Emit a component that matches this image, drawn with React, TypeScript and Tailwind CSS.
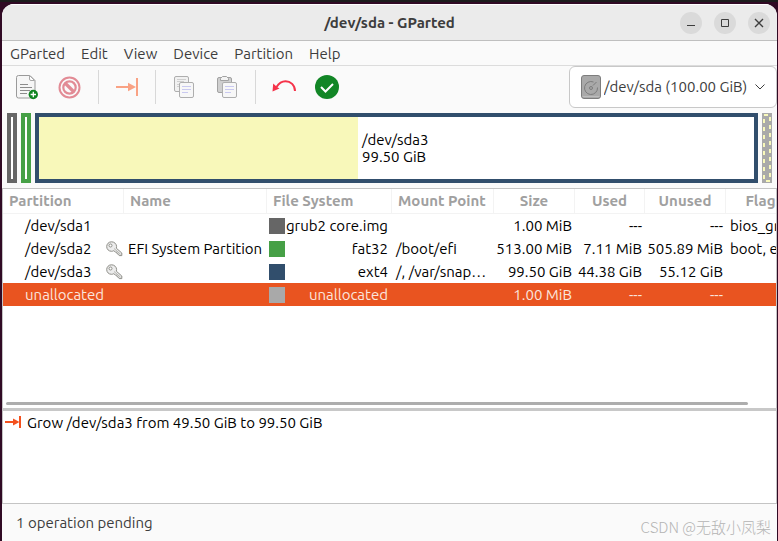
import React from "react";

type Row = {
  name: string;
  locked: boolean;
  label: string;
  fs: string;
  color: string;
  mount: string;
  size: string;
  used: string;
  unused: string;
  flags: string;
  selected?: boolean;
};

const rows: Row[] = [
  { name: "/dev/sda1", locked: false, label: "", fs: "grub2 core.img", color: "bg-[#666666]", mount: "", size: "1.00 MiB", used: "---", unused: "---", flags: "bios_grub" },
  { name: "/dev/sda2", locked: true, label: "EFI System Partition", fs: "fat32", color: "bg-[#46a046]", mount: "/boot/efi", size: "513.00 MiB", used: "7.11 MiB", unused: "505.89 MiB", flags: "boot, esp" },
  { name: "/dev/sda3", locked: true, label: "", fs: "ext4", color: "bg-[#314e6c]", mount: "/, /var/snap…", size: "99.50 GiB", used: "44.38 GiB", unused: "55.12 GiB", flags: "" },
  { name: "unallocated", locked: false, label: "", fs: "unallocated", color: "bg-[#a9a9a9]", mount: "", size: "1.00 MiB", used: "---", unused: "---", flags: "", selected: true },
];

const menus = ["GParted", "Edit", "View", "Device", "Partition", "Help"];

function NewIcon() {
  return (
    <svg width="22" height="26" viewBox="0 0 22 26" fill="none">
      <path d="M2 1.5h11.500l5 5V22a2 2 0 0 1-2 2H2a2 2 0 0 1-2-2V3.500a2 2 0 0 1 2-2z" transform="translate(0.5 0)" fill="#f6f6f6" stroke="#9a9a9a" />
      <path d="M13.500 1.500V5a1.500 1.500 0 0 0 1.500 1.500h3.500z" fill="#fff" stroke="#a8a8a8" />
      <path d="M4 10.500h8M4 13.500h12M4 16.500h10M4 19.500h7" stroke="#8c8c8c" />
      <circle cx="17.300" cy="20.500" r="4.700" fill="#0f8420" />
      <path d="M17.300 17.800v5.400M14.600 20.500h5.400" stroke="#fff" strokeWidth="1.300" />
    </svg>
  );
}

function DeleteIcon() {
  return (
    <svg width="24" height="24" viewBox="0 0 24 24" fill="none" stroke="#e28b95">
      <circle cx="11.500" cy="12.500" r="10" strokeWidth="2" />
      <circle cx="11.500" cy="12.500" r="6.200" strokeWidth="2.200" />
      <path d="M7 8l9 9" strokeWidth="3.200" />
    </svg>
  );
}

function ResizeIcon() {
  return (
    <svg width="24" height="24" viewBox="0 0 24 24" fill="none">
      <path d="M1 12h14" stroke="#f9a284" strokeWidth="2" />
      <path d="M13 7.800L21 12l-8 4.200z" fill="#f9a284" />
      <path d="M22 3v18" stroke="#f9a284" strokeWidth="2" />
    </svg>
  );
}

function CopyIcon() {
  return (
    <svg width="24" height="24" viewBox="0 0 24 24" fill="none">
      <rect x="2.500" y="1.500" width="14" height="15" rx="1.500" fill="#f1f1f1" stroke="#aeaeae" />
      <path d="M5 4.500h9M5 6.500h7M5 9.500h3M5 11.500h3" stroke="#cfcfcf" />
      <rect x="7.500" y="7.500" width="14" height="15" rx="1.500" fill="#f7f7f7" stroke="#aeaeae" />
      <path d="M10 11.500h9M10 14.500h9M10 17.500h6" stroke="#c9c9f0" />
    </svg>
  );
}

function PasteIcon() {
  return (
    <svg width="24" height="24" viewBox="0 0 24 24" fill="none">
      <rect x="2.500" y="2.500" width="14" height="15" rx="1.500" fill="#cfcfcf" stroke="#a2a2a2" />
      <path d="M5.500 5.500v-2l2-2h4l2 2v2z" fill="#f3f3f3" stroke="#a2a2a2" />
      <rect x="7.500" y="7.500" width="14" height="15" rx="1.500" fill="#f7f7f7" stroke="#aeaeae" />
      <path d="M10 11.500h9M10 14.500h9M10 17.500h6" stroke="#c9c9f0" />
    </svg>
  );
}

function UndoIcon() {
  return (
    <svg width="24" height="24" viewBox="0 0 24 24" fill="none">
      <path d="M23 16C23 10 18.500 6.200 13.500 6.200C9.500 6.200 7 8 4.500 12" stroke="#f5334a" strokeWidth="2" />
      <path d="M1.200 8.500L0.500 16.500L7.500 13.500L5 12z" fill="#f5334a" />
    </svg>
  );
}

function ApplyIcon() {
  return (
    <svg width="24" height="24" viewBox="0 0 24 24" fill="none">
      <circle cx="12" cy="12" r="12" fill="#128626" />
      <path d="M6 12l4.500 4.500L18 9" stroke="#fff" strokeWidth="2" />
    </svg>
  );
}

function DiskIcon() {
  return (
    <svg width="20" height="24" viewBox="0 0 20 24" fill="none">
      <rect x="0.500" y="0.500" width="19" height="23" rx="2.500" fill="#a9a9a9" stroke="#7d7d7d" />
      <path d="M1.500 21.500h17" stroke="#bdbdbd" />
      <path d="M12.500 7A6.500 6.500 0 1 0 16.500 12.500" stroke="#7c7c7c" />
      <path d="M12 10.500l3.500-3.500" stroke="#7c7c7c" />
      <circle cx="10" cy="13" r="1.500" stroke="#7c7c7c" />
    </svg>
  );
}

function KeyIcon() {
  return (
    <svg width="17" height="16" viewBox="0 0 17 16" fill="none" role="img" aria-label="Locked">
      <path
        d="M5.500 0.800C8.400 0.800 10.600 3 10.600 5.600C10.600 6.200 10.500 6.700 10.300 7.200L15.800 12V14.600H13.200L12.600 13.200L11 12.700L10.700 11.200L9.300 11L7.800 9.700C7.100 10.100 6.300 10.300 5.500 10.300C2.700 10.300 0.700 8.200 0.700 5.600C0.700 3 2.700 0.800 5.500 0.800z"
        fill="#ececec"
        stroke="#8e8e88"
      />
      <circle cx="4.500" cy="4.500" r="1.500" fill="#fff" stroke="#8e8e88" />
      <path d="M8 7.500l6.500 5.700" stroke="#b5b5b0" />
    </svg>
  );
}

function ToolButton({ label, children }: { label: string; children: React.ReactNode }) {
  return (
    <button type="button" aria-label={label} className="flex h-10 w-[43px] shrink-0 items-center justify-center">
      {children}
    </button>
  );
}

function Separator() {
  return (
    <div className="flex w-[14px] shrink-0 justify-center">
      <div className="h-[34px] w-px bg-[#d8d8d8]" />
    </div>
  );
}

function WindowButton({ label, children }: { label: string; children: React.ReactNode }) {
  return (
    <button type="button" aria-label={label} className="flex size-[22px] items-center justify-center rounded-full bg-[#dadada]">
      <svg width="12" height="12" viewBox="0 0 12 12" fill="none" stroke="#3d3d3d">
        {children}
      </svg>
    </button>
  );
}

const th = "h-[25px] overflow-hidden border-r border-b border-[#f3f3f3] p-0 font-bold whitespace-nowrap";
const td = "h-[23px] overflow-hidden p-0 whitespace-nowrap";

export default function App() {
  return (
    <div className="flex min-h-screen flex-col border-t-2 border-[#1c1c1c] bg-[#300a24] pt-[2px] pr-px pl-[2px] font-['Ubuntu','Noto_Sans',sans-serif] text-[15px] leading-[18px] text-[#3d3d3d]">
      <div className="flex flex-1 flex-col overflow-hidden rounded-t-xl bg-[#fafafa]">
        <header className="grid h-[37px] grid-cols-[1fr_auto_1fr] items-center border-t border-b border-t-white border-b-[#bfbfbf] bg-[#ebebeb]">
          <div />
          <h1 className="font-bold">/dev/sda - GParted</h1>
          <div className="flex justify-end gap-3 pr-[7px]">
            <WindowButton label="Minimize"><path d="M2 8.500h8" /></WindowButton>
            <WindowButton label="Maximize"><path d="M2.500 2.500h7v7h-7z" /></WindowButton>
            <WindowButton label="Close"><path d="M2 2l8 8M10 2l-8 8" strokeWidth="1.400" /></WindowButton>
          </div>
        </header>

        <nav className="flex h-[25px] items-center gap-4 border-b border-[#dcdcdc] px-2 pt-px">
          {menus.map((m) => (
            <button type="button" key={m}>{m}</button>
          ))}
        </nav>

        <div className="flex h-[42px] items-center pl-[3px]">
          <ToolButton label="New"><NewIcon /></ToolButton>
          <ToolButton label="Delete"><DeleteIcon /></ToolButton>
          <Separator />
          <ToolButton label="Resize/Move"><ResizeIcon /></ToolButton>
          <Separator />
          <ToolButton label="Copy"><CopyIcon /></ToolButton>
          <ToolButton label="Paste"><PasteIcon /></ToolButton>
          <Separator />
          <ToolButton label="Undo"><UndoIcon /></ToolButton>
          <ToolButton label="Apply"><ApplyIcon /></ToolButton>
          <div className="relative ml-auto h-[42px] w-[208px]">
            <select
              aria-label="Device"
              className="h-full w-full appearance-none rounded-md border border-[#c8c8c8] bg-white pr-6 pl-[34px]"
            >
              <option>/dev/sda (100.00 GiB)</option>
            </select>
            <div className="pointer-events-none absolute inset-0 flex items-center justify-between pr-3 pl-3">
              <DiskIcon />
              <svg width="10" height="6" viewBox="0 0 10 6" fill="none" stroke="#3d3d3d">
                <path d="M0.500 0.500L5 5L9.500 0.500" />
              </svg>
            </div>
          </div>
        </div>

        <div className="flex h-20 gap-1 px-[5px] py-[5px]">
          <div className="w-[10px] shrink-0 border-4 border-[#666666] bg-white" />
          <div className="w-[10px] shrink-0 border-4 border-[#46a046] bg-white" />
          <div className="flex flex-1 items-center border-4 border-[#314e6c] bg-white text-black">
            <div className="h-full w-[319px] shrink-0 bg-[#f8f8ba]" />
            <p className="pl-1 leading-[17px]">
              /dev/sda3<br />99.50 GiB
            </p>
          </div>
          <svg className="h-full w-[10px] shrink-0" viewBox="0 0 10 70">
            <rect width="10" height="70" fill="#a9a9a9" />
            <path d="M2 6V70M8 4V66" stroke="#f8f8ba" strokeWidth="2" strokeDasharray="4 4" />
            <path d="M2 2h4M4 68h4" stroke="#f8f8ba" strokeWidth="2" />
          </svg>
        </div>

        <section className="flex h-[220px] flex-col overflow-hidden border-t border-r border-l border-[#c4c4c4] bg-white text-black">
          <table className="w-[800px] table-fixed border-separate border-spacing-0">
            <colgroup>
              <col className="w-[121px]" />
              <col className="w-[143px]" />
              <col className="w-[125px]" />
              <col className="w-[102px]" />
              <col className="w-[81px]" />
              <col className="w-[70px]" />
              <col className="w-[81px]" />
              <col className="w-[77px]" />
            </colgroup>
            <thead className="text-[#a0a0a0]">
              <tr>
                <th className={`${th} pl-[6px] text-left`}>Partition</th>
                <th className={`${th} pl-[6px] text-left`}>Name</th>
                <th className={`${th} pl-[6px] text-left`}>File System</th>
                <th className={`${th} pl-[6px] text-left`}>Mount Point</th>
                <th className={th}>Size</th>
                <th className={th}>Used</th>
                <th className={th}>Unused</th>
                <th className={th}>Flags</th>
              </tr>
            </thead>
            <tbody>
              {rows.map((r) => (
                <tr key={r.name} className={r.selected ? "bg-[#e95420] text-[#fbe5dd]" : ""}>
                  <td className={td}>
                    <div className="flex items-center justify-between pr-px pl-[22px]">
                      {r.name}
                      {r.locked && <KeyIcon />}
                    </div>
                  </td>
                  <td className={`${td} pl-1`}>{r.label}</td>
                  <td className={td}>
                    <div className="flex items-center justify-between pr-1 pl-[2px]">
                      <span className={`size-4 shrink-0 ${r.color}`} />
                      {r.fs}
                    </div>
                  </td>
                  <td className={`${td} pl-1`}>{r.mount}</td>
                  <td className={`${td} pr-[3px] text-right`}>{r.size}</td>
                  <td className={`${td} pr-[3px] text-right`}>{r.used}</td>
                  <td className={`${td} pr-[3px] text-right`}>{r.unused}</td>
                  <td className={`${td} pl-1`}>{r.flags}</td>
                </tr>
              ))}
            </tbody>
          </table>
          <div className="mt-auto mr-7 mb-[3px] ml-[3px] h-[3px] shrink-0 rounded-full bg-[#adadad]" />
        </section>

        <div className="h-[3px] shrink-0 bg-[#c8c8c8]" />

        <section className="flex-1 border-r border-b border-l border-[#c4c4c4] bg-white text-black">
          <div className="flex h-[23px] items-center gap-1 pl-[2px]">
            <svg width="18" height="16" viewBox="0 0 18 16" fill="none" className="shrink-0">
              <path d="M0 7h10" stroke="#f4511e" strokeWidth="2" />
              <path d="M8 3.500L14.500 7L8 10.500z" fill="#f4511e" />
              <path d="M15 1v12" stroke="#f4511e" strokeWidth="2" />
            </svg>
            <span>Grow /dev/sda3 from 49.50 GiB to 99.50 GiB</span>
          </div>
        </section>

        <footer className="flex h-[37px] items-center justify-between pr-[6px] pl-[14px]">
          <span>1 operation pending</span>
          <span className="pt-2 font-['Noto_Sans_CJK_SC',sans-serif] font-light text-[#b4b4b4]">CSDN @无敌小凤梨</span>
        </footer>
      </div>
    </div>
  );
}
